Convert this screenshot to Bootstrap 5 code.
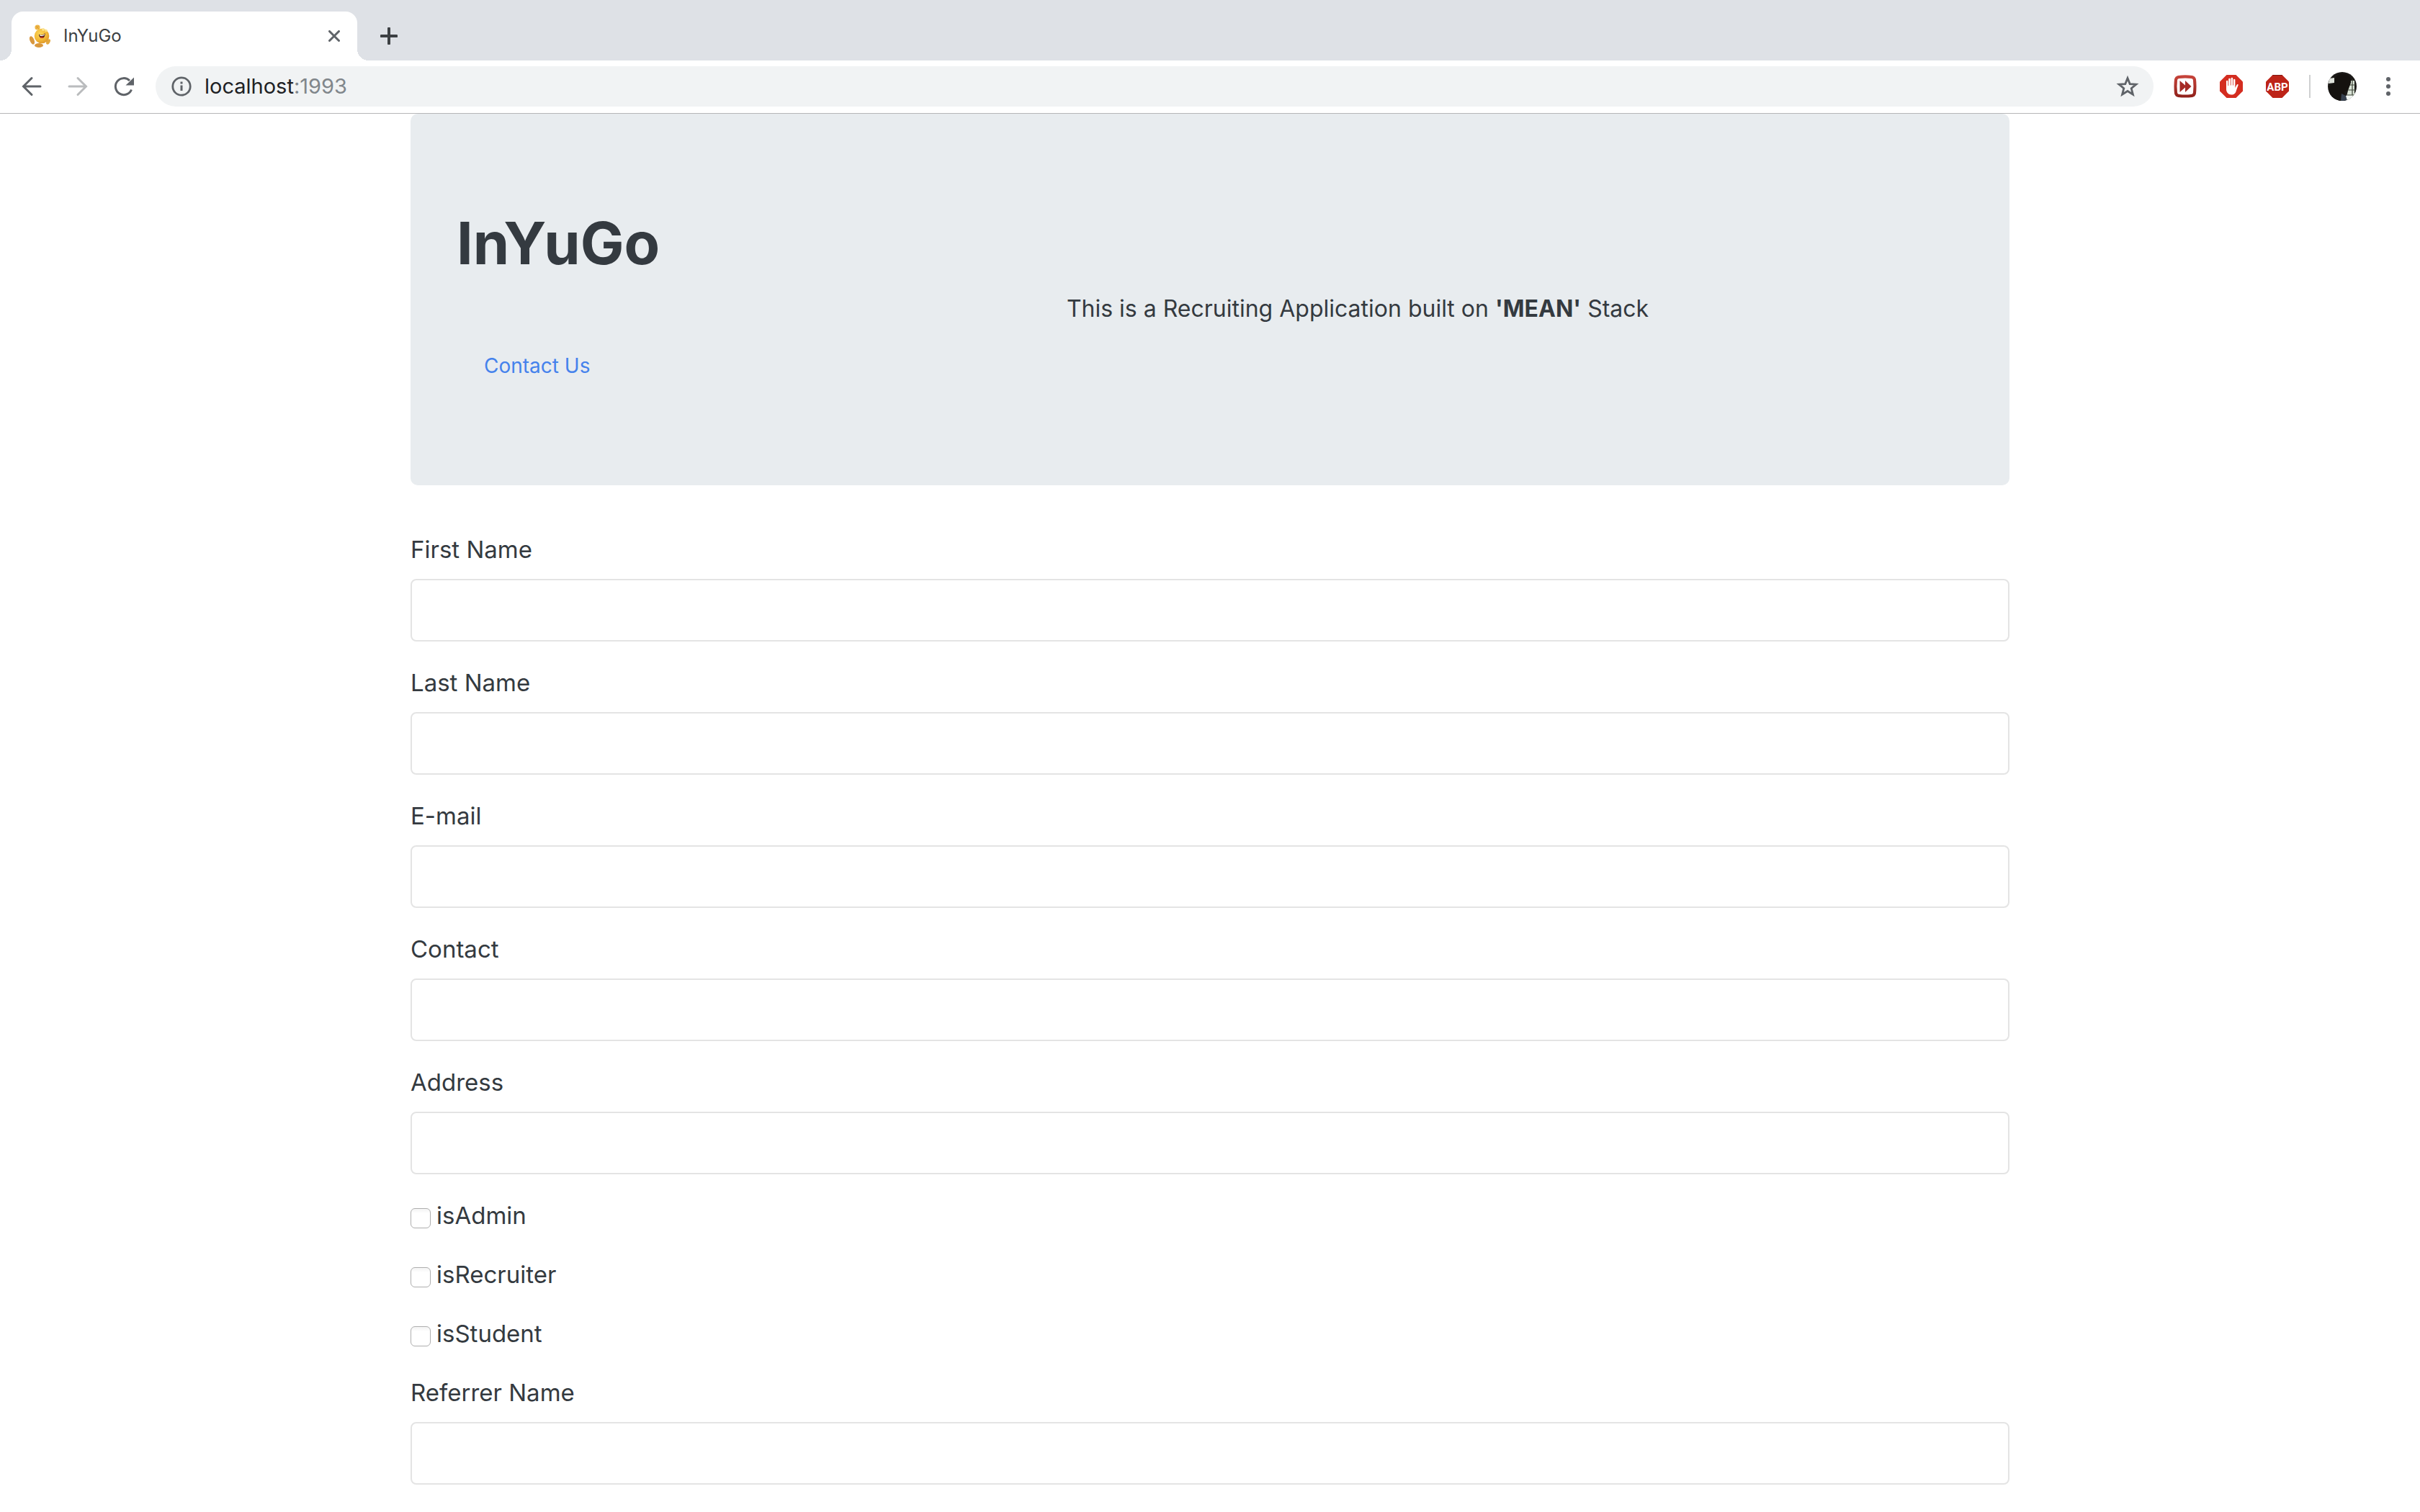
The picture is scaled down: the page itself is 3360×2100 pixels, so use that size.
<!DOCTYPE html>
<html lang="en">
<head>
<meta charset="utf-8">
<meta name="viewport" content="width=device-width, initial-scale=1">
<title>InYuGo</title>
<link href="https://cdn.jsdelivr.net/npm/bootstrap@5.3.0/dist/css/bootstrap.min.css" rel="stylesheet">
<style>
  body { font-family: Inter, "Liberation Sans", sans-serif; font-size: 33px; line-height: 50px; color: #343a40; background: #fff; }
  html, body { height: 100%; }
  .shell { height: 100vh; overflow: hidden; }

  /* Browser chrome */
  .tab-strip { height: 84px; background: #dee1e6; padding: 16px 16px 0; }
  .browser-tab { position: relative; width: 480px; height: 68px; background: #fff; border-radius: 16px 16px 0 0; padding: 0 24px; color: #3c4043; font-size: 24px; line-height: 32px; }
  .browser-tab::before, .browser-tab::after { content: ""; position: absolute; bottom: 0; width: 16px; height: 16px; }
  .browser-tab::before { left: -16px; background: radial-gradient(circle at 0 0, transparent 16px, #fff 16px); }
  .browser-tab::after { right: -16px; background: radial-gradient(circle at 100% 0, transparent 16px, #fff 16px); }
  .icon-btn { background: none; border: 0; padding: 0; display: flex; align-items: center; justify-content: center; color: #5f6368; }
  .icon-btn svg, .browser-tab svg, .omnibox svg { display: block; flex: none; }
  .new-tab { margin-left: 28px; width: 32px; color: #3c4043; }
  .tool-bar { height: 74px; border-bottom: 1px solid #b6b6b8; padding: 8px 28px 9px; }
  .nav-set { gap: 32px; margin-right: 28px; }
  .omnibox { height: 56px; border-radius: 28px; background: #f1f3f4; padding: 0 20px 0 22px; gap: 18px; }
  .url-box { border: 0; background: none; padding: 0; font-size: 29px; line-height: 40px; color: #202124; }
  .url-host { color: #202124; }
  .url-port { color: #80868b; }
  .ext-set { gap: 32px; margin-left: 28px; }
  .ext-rule { width: 2px; height: 32px; background: #cfd0d1; margin: 0 -8px 0 -4px; }
  .menu-btn { margin-left: -4px; }

  /* Page */
  .page-area { max-width: 2280px; padding: 0 30px; }
  .hero { background: #e8ecef; border-radius: 10px; padding: 128px 64px; margin-bottom: 64px; }
  .hero-title { font-size: 81px; line-height: 104px; font-weight: 700; margin-bottom: 14px; }
  .hero-text { font-size: 32px; line-height: 50px; padding-left: 410px; margin-bottom: 17px; }
  .hero-link { display: inline-block; font-size: 28px; line-height: 43px; padding: 16px 38px; color: #4582ec; border: 0; text-decoration: none; vertical-align: top; }
  .field-group { margin-bottom: 32px; }
  .field-label { display: block; margin-bottom: 16px; }
  .form-control.field-input { height: 87px; border: 2px solid #e4e4e4; border-radius: 8px; font-size: 33px; }
  .check-row { height: 50px; margin-bottom: 32px; gap: 8px; }
  .form-check-input.check-box { width: 28px; height: 28px; margin: 7px 0 0; border: 1px solid #aeaeae; border-radius: 6px; background: linear-gradient(#f4f4f4, #fff 25%); }
</style>
<script src="https://cdn.jsdelivr.net/npm/bootstrap@5.3.0/dist/js/bootstrap.bundle.min.js"></script>
</head>
<body>
<div class="shell">
  <header>
    <div class="tab-strip d-flex">
      <div class="browser-tab d-flex align-items-center">
        <svg width="32" height="32" viewBox="0 0 32 32" aria-hidden="true">
          <defs>
            <radialGradient id="ball" cx=".4" cy=".35" r=".7"><stop offset="0" stop-color="#fbd75c"/><stop offset=".6" stop-color="#f3b936"/><stop offset="1" stop-color="#dd9428"/></radialGradient>
          </defs>
          <circle cx="12" cy="4" r="3.6" fill="#efb746"/>
          <path d="M10 2l4 4M14 1.500l-4 4" stroke="#d08f2c" stroke-width=".6"/>
          <ellipse cx="4.500" cy="22" rx="3" ry="6" transform="rotate(-22 4.500 22)" fill="#d9973c"/>
          <ellipse cx="14" cy="29" rx="6" ry="3" fill="#d9973c"/>
          <ellipse cx="27" cy="24" rx="2.400" ry="4" transform="rotate(30 27 24)" fill="#e3a83e"/>
          <circle cx="18" cy="16" r="10.300" fill="url(#ball)"/>
          <path d="M14 13.500c3 2 6 1.500 8.500-1.500.3 4-1.500 7-4 7-2.700 0-4.500-2.500-4.500-5.500z" fill="#4d1a12"/>
          <path d="M15 14.200c2.500 1.200 5 .8 7-.9l-.2 1.500c-2 1.500-4.500 1.700-6.600.6z" fill="#fff"/>
          <path d="M15.500 17.700c1.500-1 4-1 5 0-.6.900-1.400 1.400-2.500 1.400s-2-.5-2.500-1.400z" fill="#c8321f"/>
          <circle cx="20" cy="7" r="2" fill="#fbe28c"/><circle cx="24" cy="8.500" r="1.800" fill="#fbe28c"/>
        </svg>
        <span class="ms-3 flex-grow-1">InYuGo</span>
        <button class="icon-btn" type="button" aria-label="Close tab">
          <svg width="16" height="16" viewBox="0 0 16 16"><path d="M1.500 1.500l13 13M14.500 1.500l-13 13" stroke="currentColor" stroke-width="3" stroke-linecap="round"/></svg>
        </button>
      </div>
      <button class="icon-btn new-tab" type="button" aria-label="New tab">
        <svg width="24" height="24" viewBox="0 0 24 24"><path d="M12 1.500v21M1.500 12h21" stroke="currentColor" stroke-width="4" stroke-linecap="round"/></svg>
      </button>
    </div>

    <div class="tool-bar d-flex align-items-center">
      <div class="nav-set d-flex">
        <button class="icon-btn" type="button" aria-label="Back">
          <svg width="32" height="32" viewBox="0 0 32 32"><path d="M28 16H5M16 4.500L4.500 16 16 27.500" fill="none" stroke="currentColor" stroke-width="3" stroke-linecap="round"/></svg>
        </button>
        <button class="icon-btn" type="button" aria-label="Forward" disabled>
          <svg width="32" height="32" viewBox="0 0 32 32"><path d="M4 16h23M16 4.500L27.500 16 16 27.500" fill="none" stroke="#babcbe" stroke-width="3" stroke-linecap="round"/></svg>
        </button>
        <button class="icon-btn" type="button" aria-label="Reload">
          <svg width="32" height="32" viewBox="0 0 32 32"><path d="M26.500 20.500A11.500 11.500 0 1 1 24 8" fill="none" stroke="currentColor" stroke-width="3"/><path d="M30 3.500V14.500H18.500z" fill="currentColor"/></svg>
        </button>
      </div>
      <div class="omnibox d-flex align-items-center flex-grow-1">
        <svg width="28" height="28" viewBox="0 0 28 28" aria-hidden="true"><circle cx="14" cy="14" r="12.200" fill="none" stroke="#5f6368" stroke-width="2.800"/><path d="M12.500 12.500h3V20h-3zM12.500 7.500h3v3h-3z" fill="#5f6368"/></svg>
        <button class="url-box flex-grow-1 text-start" type="button" aria-label="Address"><span class="url-host">localhost</span><span class="url-port">:1993</span></button>
        <button class="icon-btn" type="button" aria-label="Bookmark">
          <svg width="32" height="32" viewBox="0 0 32 32"><path d="M16 4.500l3.200 8.100 8.700.6-6.700 5.500 2.200 8.500L16 22.500l-7.400 4.700 2.200-8.500-6.700-5.500 8.700-.6z" fill="none" stroke="currentColor" stroke-width="2.800"/></svg>
        </button>
      </div>
      <div class="ext-set d-flex align-items-center">
        <button class="icon-btn" type="button" aria-label="Fast forward">
          <svg width="32" height="32" viewBox="0 0 32 32">
            <defs><linearGradient id="ffg" x1="0" y1="0" x2="0" y2="1"><stop offset="0" stop-color="#c9453c"/><stop offset="1" stop-color="#8f211b"/></linearGradient></defs>
            <path d="M6 1Q16-.5 26 1 30 2 31 6 32 16 31 26 30 30 26 31 16 32 6 31 2 30 1 26 0 16 1 6 2 2 6 1z" fill="url(#ffg)"/>
            <path d="M8 5Q16 4 24 5q3 0 3 3 1 8 0 16 0 3-3 3-8 1-16 0-3 0-3-3-1-8 0-16 0-3 3-3z" fill="#fff"/>
            <path d="M8.500 8L16 14.500V8l8.500 8-8.500 8v-6.500L8.500 24z" fill="#a52b25"/>
          </svg>
        </button>
        <button class="icon-btn" type="button" aria-label="AdBlock">
          <svg width="32" height="32" viewBox="0 0 32 32"><path d="M9.500 0h13L32 9.500v13L22.500 32h-13L0 22.500v-13z" fill="#d42d20"/>
            <path d="M9 20V9a1.200 1.200 0 0 1 2.400 0v6h.8V6a1.300 1.300 0 0 1 2.600 0v8.500h.8V5a1.300 1.300 0 0 1 2.600 0v9.500h.8V7a1.200 1.200 0 0 1 2.400 0v11l2-4c.8-1.400 2.600-1.200 2.200.3L23 21.500C22 25.500 20 27.500 16 27.500S9 24 9 20z" fill="#fff"/></svg>
        </button>
        <button class="icon-btn" type="button" aria-label="Adblock Plus">
          <svg width="32" height="32" viewBox="0 0 32 32"><path d="M9.500 0h13L32 9.500v13L22.500 32h-13L0 22.500v-13z" fill="#bd2418"/><path d="M9.500.5h13" stroke="#7d1710"/>
            <text x="16" y="22" text-anchor="middle" font-family="Roboto, sans-serif" font-weight="700" font-size="15" fill="#fff">ABP</text></svg>
        </button>
        <span class="ext-rule"></span>
        <button class="icon-btn" type="button" aria-label="Profile">
          <svg width="40" height="40" viewBox="0 0 40 40">
            <defs><clipPath id="face"><circle cx="20" cy="20" r="20"/></clipPath></defs>
            <g clip-path="url(#face)">
              <rect width="40" height="40" fill="#1b1917"/>
              <path d="M2 9l7-1v7l-8 1z" fill="#dfe3dc"/>
              <path d="M31 12h6v26H25l3-12z" fill="#d9e3d6"/>
              <path d="M25 33l9-1v8h-9z" fill="#f2f6f4"/>
              <path d="M27 18h11M27 25h12M27 32h10M34 10v22" stroke="#3e4438" stroke-width="1.200"/>
              <path d="M11 8Q15 1 24 3q9 2 8 12l-3 8-2 3-4 1 1 13H4l-3-20 8-5z" fill="#15120f"/>
              <path d="M19 30l6 3 2 7h-9z" fill="#36404e"/>
            </g>
          </svg>
        </button>
        <button class="icon-btn menu-btn" type="button" aria-label="Menu">
          <svg width="32" height="32" viewBox="0 0 32 32" fill="currentColor"><circle cx="16" cy="6" r="3"/><circle cx="16" cy="16" r="3"/><circle cx="16" cy="26" r="3"/></svg>
        </button>
      </div>
    </div>
  </header>

  <main class="container page-area">
    <section class="hero">
      <h1 class="hero-title">InYuGo</h1>
      <p class="hero-text text-center">This is a Recruiting Application built on <strong>'MEAN'</strong> Stack</p>
      <a class="hero-link" href="#contact">Contact Us</a>
    </section>
    <form>
      <div class="field-group"><label class="field-label" for="first">First Name</label><input class="form-control field-input" id="first" type="text"></div>
      <div class="field-group"><label class="field-label" for="last">Last Name</label><input class="form-control field-input" id="last" type="text"></div>
      <div class="field-group"><label class="field-label" for="email">E-mail</label><input class="form-control field-input" id="email" type="email"></div>
      <div class="field-group"><label class="field-label" for="contact">Contact</label><input class="form-control field-input" id="contact" type="text"></div>
      <div class="field-group"><label class="field-label" for="address">Address</label><input class="form-control field-input" id="address" type="text"></div>
      <div class="check-row d-flex align-items-center"><input class="form-check-input check-box" id="admin" type="checkbox"><label for="admin">isAdmin</label></div>
      <div class="check-row d-flex align-items-center"><input class="form-check-input check-box" id="recruiter" type="checkbox"><label for="recruiter">isRecruiter</label></div>
      <div class="check-row d-flex align-items-center"><input class="form-check-input check-box" id="student" type="checkbox"><label for="student">isStudent</label></div>
      <div class="field-group"><label class="field-label" for="referrer">Referrer Name</label><input class="form-control field-input" id="referrer" type="text"></div>
    </form>
  </main>
</div>
</body>
</html>
